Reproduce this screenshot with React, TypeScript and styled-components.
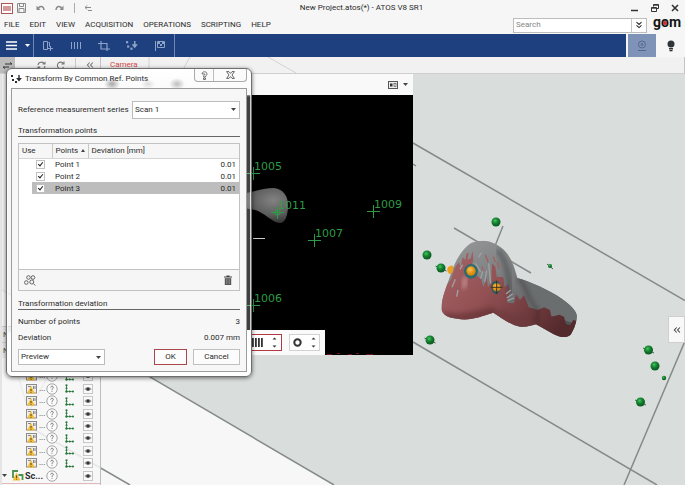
import React from "react";
import styled, { createGlobalStyle, css } from "styled-components";

const Global = createGlobalStyle`
  *, *::before, *::after { box-sizing: border-box; }
  html, body, #root { height: 100%; }
  body {
    margin: 0;
    overflow: hidden;
    background: #f6f6f6;
    color: #2b2b2b;
    font-family: Roboto, "Open Sans", sans-serif;
    font-size: 8px;
    line-height: 12px;
  }
  button, input, select { font: inherit; color: inherit; }
  svg { display: block; flex: none; }
`;

const Page = styled.div`
  display: flex;
  flex-direction: column;
  height: 100%;
  position: relative;
`;

const PlainButton = styled.button`
  display: flex;
  align-items: center;
  justify-content: center;
  padding: 0;
  border: 0;
  background: none;
`;

/* ---------- window header ---------- */

const TitleBar = styled.header`
  display: flex;
  align-items: center;
  height: 16px;
  flex: none;
  padding: 0 6px 0 1px;
`;

const QuickTools = styled.div<{ $tight?: boolean }>`
  display: flex;
  align-items: center;
  gap: ${(p) => (p.$tight ? 4 : 10)}px;
  color: #8b8b8b;
`;

const WindowTitle = styled.h1`
  flex: 1;
  margin: 0;
  font-size: 8px;
  line-height: 14px;
  font-weight: 400;
  text-align: center;
`;

const WindowButtons = styled.div`
  display: flex;
  gap: 12px;
  color: #333;
`;

const MenuBar = styled.nav`
  display: flex;
  align-items: center;
  gap: 10px;
  height: 18px;
  flex: none;
  padding: 0 3px 0 4px;
`;

const MenuLink = styled.a`
  color: #2b2b2b;
  text-decoration: none;
`;

const MenuEnd = styled.div`
  display: flex;
  align-items: center;
  gap: 6px;
  margin-left: auto;
`;

const LogoMark = styled.svg`
  overflow: visible;
`;

const SearchBox = styled.form`
  display: flex;
  width: 134px;
  height: 15px;
  border: 1px solid #bdbdbd;
  background: #fff;
`;

const SearchInput = styled.input`
  flex: 1;
  min-width: 0;
  padding: 0 2px;
  border: 0;
  outline: 0;
  background: none;
  &::placeholder { color: #868686; opacity: 1; }
`;

const SearchMore = styled(PlainButton)`
  width: 15px;
  border-left: 1px solid #c4c4c4;
`;

const Ribbon = styled.div`
  display: flex;
  height: 23px;
  flex: none;
`;

const RibbonMain = styled.div`
  display: flex;
  flex: 1;
  align-items: stretch;
  background: #1f407f;
  color: #8fa3c9;
`;

const RibbonMenu = styled(PlainButton)`
  width: 34px;
  gap: 8px;
  padding-left: 2px;
  color: #fff;
  border-right: 1px solid #6f86b5;
`;

const RibbonGroup = styled.div`
  display: flex;
  align-items: center;
  gap: 16px;
  padding: 0 8px;
  border-right: 1px solid #6f86b5;
`;

const RibbonSide = styled(PlainButton)<{ $active?: boolean }>`
  width: ${(p) => (p.$active ? 28 : 29)}px;
  margin-left: ${(p) => (p.$active ? 2 : 0)}px;
  background: ${(p) => (p.$active ? "#7f92b8" : "transparent")};
  color: ${(p) => (p.$active ? "#56688e" : "#2e3438")};
`;

const TabStrip = styled.div`
  display: flex;
  align-items: center;
  height: 17px;
  flex: none;
  position: relative;
  background: #f1f1f1;
  border-bottom: 1px solid #cfcfcf;
  border-right: 1px solid #c4c4c4;
  color: #777;
`;

const StripLines = styled.svg`
  position: absolute;
  inset: 0;
`;

const StripToggle = styled(PlainButton)`
  width: 15px;
  height: 16px;
  background: #bcbcbc;
  color: #333;
`;

const StripTools = styled.div`
  display: flex;
  align-items: center;
  justify-content: space-between;
  width: 86px;
  height: 16px;
  padding: 0 6px 0 22px;
  border-right: 1px solid #c4c4c4;
`;

const StripTab = styled.button`
  padding: 0 9px;
  border: 0;
  background: none;
  font-size: 8px;
  color: #d2474b;
`;

/* ---------- workspace ---------- */

const Workspace = styled.main`
  flex: 1;
  min-height: 0;
  display: grid;
  grid-template-columns: 101px 312px 1fr;
  grid-template-rows: minmax(0, 1fr);
  align-items: start;
  position: relative;
`;

const Scene = styled.svg`
  position: absolute;
  inset: 0;
  width: 100%;
  height: 100%;
`;

const Sidebar = styled.aside`
  position: relative;
  display: flex;
  flex-direction: column;
  align-self: stretch;
  padding-bottom: 1px;
  background: rgba(247, 247, 247, 0.85);
  border-left: 2px solid #e4e4e4;
  border-right: 1px solid #bdbdbd;
`;

const SidebarHeads = styled.div`
  display: flex;
  flex-direction: column;
  justify-content: flex-end;
  height: 284px;
  flex: none;
`;

const SidebarHead = styled.div`
  height: 16px;
  padding: 2px 1px;
  border-top: 1px solid #cfcfcf;
  background: #e9e9e9;
  color: #555;
`;

const Tree = styled.ul`
  display: flex;
  flex-direction: column;
  flex: 1;
  margin: 0;
  padding: 12px 0 1px;
  list-style: none;
  border-bottom: 1px solid #e3b9b9;
`;

const TreeRow = styled.li<{ $group?: boolean }>`
  flex: 1;
  display: grid;
  grid-template-columns: ${(p) => (p.$group ? "10px 13px 21px 19px 18px 10px" : "24px 13px 7px 19px 18px 10px")};
  align-items: center;
  font-weight: ${(p) => (p.$group ? 700 : 400)};
  font-size: ${(p) => (p.$group ? 9 : 8)}px;
`;

const EyeButton = styled(PlainButton)`
  width: 10px;
  height: 10px;
  border: 1px solid #c6c6c6;
  background: #fafafa;
`;

const CameraPanel = styled.section`
  position: relative;
  display: grid;
  grid-template-rows: 21px 260px;
`;

const CameraHeader = styled.div`
  display: flex;
  align-items: center;
  justify-content: flex-end;
  gap: 5px;
  padding-right: 5px;
  background: #f9f9f9;
  color: #444;
`;

const CameraImage = styled.svg`
  width: 100%;
  height: 100%;
  background: #000;
`;

const CameraTools = styled.div`
  position: absolute;
  left: 100px;
  bottom: 0;
  display: flex;
  align-items: center;
  justify-content: flex-end;
  gap: 7px;
  width: 124px;
  height: 25px;
  padding-right: 5px;
  background: #fafafa;
`;

const ToolSpin = styled(PlainButton)<{ $active?: boolean }>`
  width: ${(p) => (p.$active ? 36 : 31)}px;
  height: 17px;
  gap: 9px;
  color: #333;
  background: #fff;
  border: 1px solid ${(p) => (p.$active ? "#b3383f" : "#d2d2d2")};
`;

const PaneToggle = styled(PlainButton)`
  position: relative;
  justify-self: end;
  width: 17px;
  height: 27px;
  margin-top: 242px;
  background: #f8f8f8;
  border: 1px solid #cfcfcf;
  color: #444;
`;

/* ---------- dialog ---------- */

const Dialog = styled.section`
  position: absolute;
  left: 6px;
  top: 68px;
  width: 246px;
  padding: 0 4px 4px;
  border: 1px solid #6e6e6e;
  border-radius: 6px;
  background:
    radial-gradient(ellipse 8px 6px at 105px 15px, rgba(110, 110, 110, 0.6), transparent),
    radial-gradient(ellipse 7px 5px at 141px 15px, rgba(150, 150, 150, 0.3), transparent),
    radial-gradient(ellipse 8px 6px at 170px 15px, rgba(130, 130, 130, 0.5), transparent),
    linear-gradient(#fff 0, #fafafa 24px, rgba(255, 255, 255, 0.25) 28px, rgba(255, 255, 255, 0.25) 262px, #fff 264px);
  box-shadow: inset 0 0 0 1px rgba(255, 255, 255, 0.75), 0 1px 4px rgba(0, 0, 0, 0.55);
`;

const DialogTitle = styled.header`
  display: flex;
  align-items: flex-start;
  height: 19px;
`;

const DialogName = styled.h2`
  display: flex;
  align-items: center;
  gap: 3px;
  flex: 1;
  margin: 0;
  height: 20px;
  font-size: 8px;
  font-weight: 400;
`;

const DialogButtons = styled.div`
  display: flex;
  border: 1px solid #a9a9a9;
  border-top: 0;
  border-radius: 0 0 4px 4px;
  background: #fbfbfb;
`;

const DialogButton = styled(PlainButton)<{ $wide?: boolean }>`
  width: ${(p) => (p.$wide ? 33 : 18)}px;
  height: 12px;
  color: #555;
  ${(p) => p.$wide && css`border-left: 1px solid #bdbdbd;`}
`;

const DialogBody = styled.div`
  display: flex;
  flex-direction: column;
  padding: 12px 6px 6px;
  border: 1px solid #9c9c9c;
  background: #f7f7f7;
`;

const FieldRow = styled.div`
  display: flex;
  align-items: center;
  justify-content: space-between;
`;

const SectionTitle = styled.h3<{ $tight?: boolean }>`
  margin: ${(p) => (p.$tight ? 1 : 6)}px 0 0;
  height: 12px;
  font-size: 8px;
  line-height: 11px;
  font-weight: 400;
  border-bottom: 1px solid #666;
`;

const SelectWrap = styled.span<{ $width: number }>`
  position: relative;
  display: block;
  width: ${(p) => p.$width}px;
  svg { position: absolute; right: 4px; top: 7px; pointer-events: none; }
`;

const SelectBox = styled.select<{ $tall?: boolean }>`
  appearance: none;
  display: block;
  width: 100%;
  height: ${(p) => (p.$tall ? 18 : 16)}px;
  padding: 0 2px;
  border: 1px solid #bcbcbc;
  border-radius: 0;
  background: #fff;
`;

const ListPanel = styled.div`
  display: flex;
  flex-direction: column;
  height: 148px;
  margin: 6px 0;
  border: 1px solid #c2c2c2;
  background: #fff;
`;

const PointsTable = styled.table`
  width: 100%;
  table-layout: fixed;
  border-collapse: collapse;
  th {
    height: 14px;
    padding: 0 0 0 3px;
    font-weight: 400;
    text-align: left;
    white-space: nowrap;
    background: #f6f6f6;
    border-bottom: 1px solid #d5d5d5;
  }
  th + th { border-left: 1px solid #c9c9c9; }
  td { height: 12px; padding: 0 3px; line-height: 11px; }
  td:first-child { padding: 0 7px 0 0; }
  td:last-child { text-align: right; }
`;

const PointRow = styled.tr<{ $selected?: boolean }>`
  ${(p) =>
    p.$selected &&
    css`
      td { background: #bdbdbd; }
      td:first-child { background: linear-gradient(90deg, #fff 13px, #bdbdbd 13px); }
    `}
`;

const SortMark = styled.span`
  display: inline-block;
  margin-left: 3px;
  vertical-align: middle;
  border: 2px solid transparent;
  border-top: 0;
  border-bottom: 3px solid #444;
`;

const Tick = styled.input`
  appearance: none;
  display: block;
  width: 9px;
  height: 9px;
  margin: 0 0 0 auto;
  position: relative;
  background: #fff;
  border: 1px solid #c0c0c0;
  &:checked::after {
    content: "";
    position: absolute;
    left: 2px;
    top: 0;
    width: 3px;
    height: 5px;
    border: solid #222;
    border-width: 0 1px 1px 0;
    transform: rotate(40deg);
  }
`;

const ListTools = styled.div`
  display: flex;
  align-items: center;
  justify-content: space-between;
  height: 21px;
  margin-top: auto;
  padding: 0 7px 0 5px;
  background: #f6f6f6;
  border-top: 1px solid #c2c2c2;
`;

const Results = styled.dl`
  display: grid;
  grid-template-columns: 1fr auto;
  row-gap: 4px;
  margin: 6px 0 5px;
  dd { margin: 0; text-align: right; }
`;

const ActionButton = styled.button<{ $primary?: boolean }>`
  width: ${(p) => (p.$primary ? 33 : 47)}px;
  height: 16px;
  margin-left: ${(p) => (p.$primary ? "auto" : "6px")};
  padding: 0;
  background: #fcfcfc;
  border: 1px solid ${(p) => (p.$primary ? "#a8484d" : "#c0c0c0")};
`;

/* ---------- drawings ---------- */

const line = { fill: "none", stroke: "currentColor" } as const;

const Caret = ({ color = "#444" }: { color?: string }) => (
  <svg width="5" height="3" viewBox="0 0 5 3"><path d="M0 0h5L2.5 3z" fill={color} /></svg>
);

const Chevrons = ({ turn = 0 }: { turn?: number }) => (
  <svg width="8" height="8" viewBox="0 0 8 8" {...line} strokeWidth="1.1">
    <g transform={`rotate(${turn} 4 4)`}><path d="M3.7 1.5 1.4 4l2.3 2.5M6.9 1.5 4.6 4l2.3 2.5" /></g>
  </svg>
);

const PointsIcon = ({ size = 11 }: { size?: number }) => (
  <svg width={size} height={size} viewBox="0 0 11 11" fill="currentColor">
    <rect x="0" y="1" width="2" height="2" /><rect x="1" y="5" width="2" height="2" /><rect x="4" y="7" width="2" height="2" />
    <path d="M7.300 1h1.400v3h2.200L8 7.500 5.100 4h2.200z" />
  </svg>
);

const Bars = () => (
  <svg width="11" height="9" viewBox="0 0 11 9" fill="currentColor">
    {[0, 3, 6, 9].map((x) => <rect key={x} x={x} width="1.8" height="9" />)}
  </svg>
);

const UpDown = () => (
  <svg width="5" height="11" viewBox="0 0 5 11" fill="currentColor"><path d="M.5 2.500 2.500.5l2 2zM.5 8.500h4l-2 2z" /></svg>
);

const Undo = ({ flip }: { flip?: boolean }) => (
  <svg width="9" height="9" viewBox="0 0 9 9">
    <g transform={flip ? "matrix(-1 0 0 1 9 0)" : undefined}>
      <path d="M2 4.500C4 1.500 7.500 1.800 8 6" {...line} strokeWidth="1.500" /><path d="M.5 1.500v4.500h4z" fill="currentColor" />
    </g>
  </svg>
);

const Refresh = ({ double }: { double?: boolean }) => (
  <svg width="9" height="9" viewBox="0 0 9 9" {...line} strokeWidth="1.100">
    {double
      ? <path d="M1 4C1.500.500 6 .3 7.500 3M8 .7V3H5.600M8 5C7.500 8.500 3 8.700 1.500 6M1 8.300V6h2.400" />
      : <path d="M7.300 2.400A3.300 3.300 0 1 0 7.600 6M8 .5v2.500H5.400" />}
  </svg>
);

const ScanIcon = () => (
  <svg width="11" height="10" viewBox="0 0 11 10">
    <rect x=".5" y=".5" width="10" height="8.500" fill="#eee" stroke="#8c8c8c" />
    <path d="M2 2.500h3M7.500 2v3M9 2v3" stroke="#888" fill="none" />
    <path d="M5 2 9 9.500H1z" fill="#f0bd3c" /><path d="M5 5v2.200M5 8v.8" stroke="#5a4510" />
  </svg>
);

const GroupIcon = () => (
  <svg width="12" height="11" viewBox="0 0 12 11">
    <path d="M1 8V1h5M6.500 5h4v5" fill="none" stroke="#46924f" strokeWidth="1.800" />
    <path d="M4.500 2.500 8.500 10.500H.5z" fill="#f0bd3c" /><path d="M4.500 5.500v2.300M4.500 8.700v.8" stroke="#5a4510" />
  </svg>
);

const HelpMark = () => (
  <svg width="12" height="12" viewBox="0 0 12 12">
    <circle cx="6" cy="6" r="5.200" fill="#fbfbfb" stroke="#9c9c9c" strokeWidth=".9" />
    <path d="M4.700 4.600c.1-1.900 2.700-1.700 2.600-.1C7.200 5.600 6 5.500 6 6.900M6 7.800v1" {...line} stroke="#555" strokeWidth=".8" />
  </svg>
);

const AxesIcon = () => (
  <svg width="9" height="9" viewBox="0 0 9 9">
    <path d="M1.500 1v6.500H8" fill="none" stroke="#5c9a66" /><g fill="#24763a">
      <circle cx="1.500" cy="1.300" r="1.100" /><circle cx="1.500" cy="4.300" r="1" /><circle cx="1.500" cy="7.500" r="1.200" /><circle cx="4.800" cy="7.500" r="1" /><circle cx="7.900" cy="7.500" r="1.100" /></g>
  </svg>
);

const Eye = () => (
  <svg width="8" height="6" viewBox="0 0 8 6"><path d="M.3 3Q4-.8 7.700 3 4 6.800.3 3z" fill="#999" /><circle cx="4" cy="3" r="1.600" fill="#333" /></svg>
);

const Logo = () => (
  <LogoMark width="29" height="18" viewBox="0 0 29 18" role="img" aria-label="gom">
    <text x="0" y="11" fontFamily="Roboto, sans-serif" fontWeight="700" fontSize="14" fill="#151515">gom</text>
    <circle cx="12" cy="7" r="2" fill="#cf2b31" />
  </LogoMark>
);

const Ball = ({ x, y, r = 4.500, axis = true }: { x: number; y: number; r?: number; axis?: boolean }) => (
  <g>
    {axis && <path d={`M${x - r - 1} ${y - 2}L${x + r + 1} ${y + 3}`} stroke="#4d5a50" />}
    <circle cx={x} cy={y} r={r} fill="url(#ball)" />
  </g>
);

const SceneDrawing = () => (
  <Scene viewBox="0 74 685 411" preserveAspectRatio="xMinYMin slice" aria-hidden="true">
    <defs>
      <radialGradient id="ball" cx=".4" cy=".35"><stop offset="0" stopColor="#4cc466" /><stop offset=".45" stopColor="#1b9338" /><stop offset="1" stopColor="#0d6324" /></radialGradient>
      <radialGradient id="gold" cx=".4" cy=".35"><stop offset="0" stopColor="#ffc247" /><stop offset="1" stopColor="#d98a0d" /></radialGradient>
      <linearGradient id="bone" x1="0" y1="0" x2=".8" y2="1"><stop offset="0" stopColor="#9b9d9e" /><stop offset=".5" stopColor="#77797a" /><stop offset="1" stopColor="#4a4d4e" /></linearGradient>
      <linearGradient id="flesh" x1="0" y1="0" x2="1" y2=".6"><stop offset="0" stopColor="#a8676a" /><stop offset=".45" stopColor="#935154" /><stop offset="1" stopColor="#552a2d" /></linearGradient>
      <filter id="soft"><feGaussianBlur stdDeviation="6" /></filter>
      <clipPath id="body"><path d="M95 330C93 300 106 270 118 235C132 190 152 150 182 130C212 115 250 122 275 144C302 166 312 196 322 234C360 244 420 272 455 296C482 316 503 334 500 352C499 372 490 392 482 404C470 415 450 413 430 402L378 373C366 376 352 381 332 380C300 376 270 350 250 338C215 348 180 364 142 356C116 354 98 345 95 330Z" /></clipPath>
    </defs>
    <path d="M0 74H685V485H334L148 376 0 289Z" fill="#d9dddc" />
    <path d="M0 289 334 485H0Z" fill="#f7f7f7" />
    <g stroke="#858a8a" strokeWidth="1.500" fill="none">
      <path d="M0 289 334 485M28 426 130 485M413 143 685 300.500M413 342 657 485M685 341 624 485M413 164l3 2" />
      <path d="M454 228 531 273M503 226l-8 20" />
      <path d="M18 376 29 412 50 372" stroke="#b5b5b5" />
    </g>
    <g transform="translate(410 200) scale(.33333)">
      <g clipPath="url(#body)">
        <rect x="80" y="110" width="440" height="320" fill="url(#bone)" />
        <path d="M322 234C350 262 350 300 358 324L520 380V290L420 250Z" fill="#6a6e6f" />
        <path d="M80 290 122 240 134 205 146 186 152 200 158 172 166 180 170 160 176 158 172 180 182 175 188 152 190 180 184 200 204 230 214 238 220 262 230 234 234 262 244 246 246 190 256 200 260 230 280 232 284 262 294 252 300 270 292 308 312 310 318 282 330 300 342 286 356 322 384 330 402 322 420 330 424 350 448 344 462 350 468 372 480 376 490 360 510 366V430H80Z" fill="url(#flesh)" />
        <path d="M250 338C275 318 305 346 330 352 350 355 362 345 378 373L350 400H250Z" fill="#6e3a3d" opacity=".6" filter="url(#soft)" />
        <path d="M95 330C120 350 190 335 250 320L260 360 120 380Z" fill="#5e2d30" opacity=".55" filter="url(#soft)" />
        <path d="M158 235l14-10-2 34-14 12z" fill="#d5a1a2" opacity=".7" filter="url(#soft)" />
        <path d="M262 150C290 180 300 240 300 285" stroke="#3f4344" strokeWidth="16" fill="none" opacity=".5" filter="url(#soft)" />
        <path d="M322 234C360 270 350 300 384 330L378 373" stroke="#3a2c2e" strokeWidth="10" fill="none" opacity=".45" filter="url(#soft)" />
        <path d="M150 208l8-14M205 172l10-14M196 190l16 26M212 236l8-28M224 246l6-34M236 190l6 60M126 262l10-24M140 290l4-20M302 270l-14 12M308 282l-18 12M312 294l-20 8" stroke="#9fa1a2" strokeWidth="4" />
        <path d="M166 196l6-20M226 164l8 22M250 170l6 16M262 186l4 20M216 200l4 14" stroke="#a15f62" strokeWidth="4" />
      </g>
      <path d="M114 202Q130 190 130 206 128 222 118 222 108 212 114 202Z" fill="#eda01c" />
      <ellipse cx="183" cy="214" rx="21" ry="22" fill="#2e6a70" /><circle cx="183" cy="213" r="14" fill="url(#gold)" />
      <ellipse cx="258" cy="262" rx="14" ry="20" fill="#2e5a60" /><circle cx="260" cy="262" r="12" fill="url(#gold)" />
      <path d="M242 262h36M260 242v40" stroke="#3d3420" strokeWidth="3" />
    </g>
    <Ball x={496} y={222} axis={false} /><Ball x={427} y={255} axis={false} /><Ball x={441} y={268} />
    <Ball x={430} y={340} /><Ball x={550} y={266} r={2} /><Ball x={648.500} y={350} /><Ball x={655} y={366} axis={false} />
    <Ball x={664} y={378} r={2.200} axis={false} /><Ball x={640.500} y={402} />
  </Scene>
);

const marks: [number, number, string][] = [
  [253, 173, "1005"], [277, 212, "1011"], [373, 211, "1009"], [314, 240, "1007"], [253, 305, "1006"],
];

const CameraDrawing = () => (
  <CameraImage viewBox="101 95 312 260" preserveAspectRatio="xMinYMin slice">
    <defs>
      <radialGradient id="scan" cx=".72" cy=".35" r=".7"><stop offset="0" stopColor="#828282" /><stop offset=".6" stopColor="#5c5c5c" /><stop offset="1" stopColor="#2c2c2c" /></radialGradient>
    </defs>
    <path d="M235 194C250 194 260 188 274 188 284 189 288 197 288 205 288 216 285 223 280 223 272 222 268 216 258 211 250 208 243 208 235 209Z" fill="url(#scan)" />
    <path d="M253 238.500h12" stroke="#ccc" />
    <g stroke="#2d9c45" fill="none">
      {marks.map(([x, y]) => <path key={`${x}-${y}`} d={`M${x - 6} ${y + 0.5}h13M${x + 0.5} ${y - 6}v13`} />)}
      <circle cx="277.500" cy="212.500" r="2.500" />
    </g>
    <g fill="#2d9c45" fontFamily="DejaVu Sans, sans-serif" fontSize="11">
      {marks.map(([x, y, name]) => <text key={name} x={x + 1} y={y - 3}>{name}</text>)}
    </g>
    <path d="M327 354.500h5M337 353.500h3M348 354.500h4M356 353.500h3M366 354.500h7" stroke="#6d1420" />
  </CameraImage>
);

const menus = ["FILE", "EDIT", "VIEW", "ACQUISITION", "OPERATIONS", "SCRIPTING", "HELP"];
const points = ["Point 1", "Point 2", "Point 3"];

export default function App() {
  return (
    <Page>
      <Global />
      <TitleBar>
        <QuickTools>
          <QuickTools $tight>
            <svg width="12" height="11" viewBox="0 0 12 11"><rect x=".5" y=".5" width="11" height="10" fill="#fff" stroke="#b05558" /><path d="M3 3v5M5 3v5M7 3v5M9 3v5" stroke="#a33" /></svg>
            <svg width="9" height="10" viewBox="0 0 9 10" {...line}><path d="M.5.500h8v9h-8zM2.500.500v3h4v-3M2 9.500v-4h5v4" /></svg>
          </QuickTools>
          <Undo />
          <Undo flip />
          <svg width="1" height="10"><rect width="1" height="10" fill="#aaa" /></svg>
          <svg width="7" height="7" viewBox="0 0 7 7" {...line}><path d="M0 2.500h6M2 .5l-2 2 2 2M3 5.500h4" /></svg>
        </QuickTools>
        <WindowTitle>New Project.atos(*) - ATOS V8 SR1</WindowTitle>
        <WindowButtons>
          <PlainButton aria-label="Minimize"><svg width="8" height="8" viewBox="0 0 8 8"><path d="M0 6.500h7" stroke="currentColor" strokeWidth="1.500" /></svg></PlainButton>
          <PlainButton aria-label="Restore"><svg width="8" height="8" viewBox="0 0 8 8" {...line}><path d="M2.500 2.500v-2h5v4h-2M.5 3.500h5v4h-5zM.5 4.200h5M2.500 1.200h5" /></svg></PlainButton>
          <PlainButton aria-label="Close"><svg width="8" height="8" viewBox="0 0 8 8" {...line} strokeWidth="1.600"><path d="M1 1l6 6M7 1 1 7" /></svg></PlainButton>
        </WindowButtons>
      </TitleBar>
      <MenuBar>
        {menus.map((m) => <MenuLink key={m} href="#">{m}</MenuLink>)}
        <MenuEnd>
          <SearchBox>
            <SearchInput placeholder="Search" aria-label="Search" />
            <SearchMore type="button" aria-label="More"><Chevrons turn={-90} /></SearchMore>
          </SearchBox>
          <Logo />
        </MenuEnd>
      </MenuBar>
      <Ribbon>
        <RibbonMain>
          <RibbonMenu aria-label="Menu">
            <svg width="11" height="9" viewBox="0 0 11 9"><path d="M0 1h11M0 4.500h11M0 8h11" stroke="#fff" strokeWidth="1.500" /></svg>
            <Caret color="#fff" />
          </RibbonMenu>
          <RibbonGroup>
            <PlainButton aria-label="Add"><svg width="12" height="12" viewBox="0 0 12 12" {...line}><path d="M1.500 1.500h4v8h-4zM6.500 2.500h1v4M8.500 6v5M6 8.500h5" /></svg></PlainButton>
            <PlainButton aria-label="Scan"><svg width="12" height="9" viewBox="0 0 12 9" {...line}><path d="M1.500 1v7M4.500 1v7M7.500 1v7M10.500 1v7" /></svg></PlainButton>
            <PlainButton aria-label="Crop"><svg width="12" height="12" viewBox="0 0 12 12" {...line} strokeWidth="1.200"><path d="M3 1v8h9M0 3.500h9V11" /></svg></PlainButton>
            <PlainButton aria-label="Transform"><PointsIcon size={12} /></PlainButton>
            <PlainButton aria-label="Flag"><svg width="12" height="12" viewBox="0 0 12 12" {...line}><path d="M1.500 1v10M3.500 1.500h7v6h-7z" /><path d="M4 2h2v2H4zM6 4h2v2H6zM8 2h2v2H8z" fill="currentColor" stroke="none" /></svg></PlainButton>
          </RibbonGroup>
        </RibbonMain>
        <RibbonSide $active aria-label="Sensor">
          <svg width="10" height="12" viewBox="0 0 10 12" {...line}><circle cx="5" cy="4.500" r="3.500" /><circle cx="5" cy="4.500" r="1" /><path d="M1 10.500h8" /></svg>
        </RibbonSide>
        <RibbonSide aria-label="Hints">
          <svg width="8" height="12" viewBox="0 0 8 12" fill="currentColor"><circle cx="4" cy="4" r="3.500" /><rect x="2" y="8" width="4" height="1.500" /><rect x="2.500" y="10" width="3" height="1.300" /></svg>
        </RibbonSide>
      </Ribbon>
      <TabStrip>
        <StripLines width="320" height="16" {...line} stroke="#d2d2d2"><path d="M190 0l-9 16M149 16V0M268 0l28 16" /></StripLines>
        <StripToggle aria-label="Swap"><svg width="9" height="7" viewBox="0 0 9 7" {...line}><path d="M2 2h7M7 .5l2 1.500M0 5h6M0 5l2 1.500" /></svg></StripToggle>
        <StripTools>
          <Refresh double /><Refresh />
          <svg width="1" height="14"><rect width="1" height="14" fill="#c8c8c8" /></svg>
          <Chevrons />
        </StripTools>
        <StripTab>Camera</StripTab>
      </TabStrip>
      <Workspace>
        <SceneDrawing />
        <Sidebar>
          <SidebarHeads>
            <SidebarHead>N...</SidebarHead>
            <SidebarHead>N...</SidebarHead>
          </SidebarHeads>
          <Tree>
            {[0, 1, 2, 3, 4, 5, 6, 7].map((i) => (
              <TreeRow key={i}>
                <span /><ScanIcon /><span>...</span><HelpMark /><AxesIcon />
                <EyeButton aria-label="Show"><Eye /></EyeButton>
              </TreeRow>
            ))}
            <TreeRow $group>
              <Caret /><GroupIcon /><span>Sc...</span><HelpMark /><span />
              <EyeButton aria-label="Show"><Eye /></EyeButton>
            </TreeRow>
          </Tree>
        </Sidebar>
        <CameraPanel>
          <CameraHeader>
            <PlainButton aria-label="Layout">
              <svg width="10" height="8" viewBox="0 0 10 8"><rect x=".5" y=".5" width="9" height="7" fill="#eee" stroke="#555" /><rect x="2" y="2.500" width="2.500" height="3" fill="#333" /><rect x="6" y="2.500" width="2" height="3" fill="none" stroke="#555" strokeWidth=".7" /></svg>
            </PlainButton>
            <Caret />
          </CameraHeader>
          <CameraDrawing />
          <CameraTools>
            <ToolSpin $active aria-label="Pattern"><Bars /><UpDown /></ToolSpin>
            <ToolSpin aria-label="Exposure">
              <svg width="9" height="9" viewBox="0 0 9 9"><circle cx="4.500" cy="4.500" r="3.200" {...line} strokeWidth="2" /></svg>
              <UpDown />
            </ToolSpin>
          </CameraTools>
        </CameraPanel>
        <PaneToggle aria-label="Expand"><Chevrons /></PaneToggle>
      </Workspace>

      <Dialog role="dialog" aria-labelledby="dialog-name">
        <DialogTitle>
          <DialogName id="dialog-name"><PointsIcon />Transform By Common Ref. Points</DialogName>
          <DialogButtons>
            <DialogButton aria-label="Help"><svg width="7" height="9" viewBox="0 0 7 9" {...line}><path d="M1 3C1 0 6 0 6 3 6 4.500 4.500 4.500 4.500 6h-2C2.500 4 4 4 4 3H3zM2.500 7h2v1.500h-2z" strokeWidth=".8" /></svg></DialogButton>
            <DialogButton $wide aria-label="Close"><svg width="9" height="8" viewBox="0 0 9 8" {...line} strokeWidth=".9"><path d="M.6.600h2.400l1.500 1.800L6 .6h2.400L6 4l2.400 3.400H6L4.500 5.600 3 7.400H.6L3 4z" /></svg></DialogButton>
          </DialogButtons>
        </DialogTitle>
        <DialogBody>
          <FieldRow>
            <label htmlFor="series">Reference measurement series</label>
            <SelectWrap $width={108}>
              <SelectBox id="series" $tall><option>Scan 1</option></SelectBox>
              <Caret />
            </SelectWrap>
          </FieldRow>
          <SectionTitle>Transformation points</SectionTitle>
          <ListPanel>
            <PointsTable>
              <colgroup><col width="33" /><col width="36" /><col /></colgroup>
              <thead><tr><th>Use</th><th>Points<SortMark /></th><th>Deviation [mm]</th></tr></thead>
              <tbody>
                {points.map((p, i) => (
                  <PointRow key={p} $selected={i === 2}>
                    <td><Tick type="checkbox" defaultChecked aria-label={`Use ${p}`} /></td>
                    <td>{p}</td>
                    <td>0.01</td>
                  </PointRow>
                ))}
              </tbody>
            </PointsTable>
            <ListTools>
              <PlainButton aria-label="Select points"><svg width="12" height="11" viewBox="0 0 12 11" {...line} stroke="#666"><circle cx="4.500" cy="2.500" r="1.800" /><circle cx="9" cy="2.500" r="1.800" /><circle cx="2.300" cy="7.500" r="1.800" /><circle cx="7.800" cy="7" r="2" /><path d="M9.300 8.500l2 2" /></svg></PlainButton>
              <PlainButton aria-label="Delete"><svg width="8" height="10" viewBox="0 0 8 10"><path d="M0 1.500h2.500V.5h3v1H8v1H0z" fill="#444" /><path d="M.8 3.200h6.400V10H.8z" fill="#555" /><path d="M2.500 4v5M4 4v5M5.500 4v5" stroke="#999" strokeWidth=".6" /></svg></PlainButton>
            </ListTools>
          </ListPanel>
          <SectionTitle $tight>Transformation deviation</SectionTitle>
          <Results>
            <dt>Number of points</dt><dd>3</dd>
            <dt>Deviation</dt><dd>0.007 mm</dd>
          </Results>
          <FieldRow>
            <SelectWrap $width={87}>
              <SelectBox aria-label="Mode"><option>Preview</option></SelectBox>
              <Caret />
            </SelectWrap>
            <ActionButton $primary>OK</ActionButton>
            <ActionButton>Cancel</ActionButton>
          </FieldRow>
        </DialogBody>
      </Dialog>
    </Page>
  );
}
